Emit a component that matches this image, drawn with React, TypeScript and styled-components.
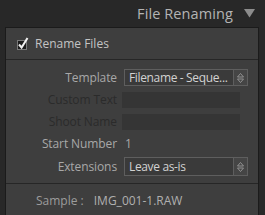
import React, { FC } from "react";
import styled, { createGlobalStyle } from "styled-components";

const GlobalStyle = createGlobalStyle`
  html, body {
    margin: 0;
    padding: 0;
    background: #282828;
    font-family: "Open Sans", "Noto Sans", sans-serif;
  }
`;

const Screen = styled.div`
  width: 265px;
  height: 215px;
  overflow: hidden;
  background: #282828;
`;

const Header = styled.div`
  height: 27px;
  display: flex;
  align-items: center;
  justify-content: flex-end;
  gap: 11px;
  padding-right: 10px;
  box-sizing: border-box;
`;

const Title = styled.span`
  color: #b4b4b4;
  font-size: 14.5px;
  letter-spacing: 0.1px;
`;

const Panel = styled.div`
  margin: 0 6px 0 5px;
  height: 188px;
  background: #3e3e3e;
  border: 1px solid #1b1b1b;
  border-bottom: none;
`;

const CheckRow = styled.label`
  height: 31px;
  display: flex;
  align-items: center;
  gap: 5px;
  padding-left: 10px;
  color: #c4c4c4;
  font-size: 12px;
`;

const Divider = styled.div`
  height: 1px;
  background: #262626;
`;

const Form = styled.div`
  display: grid;
  grid-template-columns: 111px 1fr;
  column-gap: 5px;
  row-gap: 5px;
  align-items: center;
  padding: 9px 0 7px;
`;

const Label = styled.span<{ $disabled?: boolean }>`
  text-align: right;
  font-size: 12px;
  letter-spacing: -0.1px;
  color: ${(p) => (p.$disabled ? "#2b2b2b" : "#a8a8a8")};
`;

const Select = styled.div<{ $h: number }>`
  margin-left: 2px;
  width: 124px;
  height: ${(p) => p.$h}px;
  box-sizing: border-box;
  display: flex;
  align-items: stretch;
  border: 1px solid #5e5e5e;
  background: #3a3a3a;
  color: #d2d2d2;
  font-size: 12px;
  letter-spacing: -0.35px;
`;

const SelectText = styled.span`
  flex: 1;
  display: flex;
  align-items: center;
  padding-left: 4px;
  white-space: nowrap;
  overflow: hidden;
`;

const Stepper = styled.span`
  width: 13px;
  flex-shrink: 0;
  display: flex;
  align-items: center;
  justify-content: center;
  border-left: 1px solid #5e5e5e;
  background: #454545;
`;

const TextBox = styled.div`
  width: 118px;
  height: 16px;
  background: #353535;
`;

const Value = styled.span`
  padding-left: 3px;
  color: #a8a8a8;
  font-size: 12px;
`;

const SampleRow = styled.div`
  display: flex;
  gap: 10px;
  padding: 8px 0 0 30px;
  font-size: 12px;
`;

const SampleLabel = styled.span`
  color: #9c9c9c;
`;

const SampleValue = styled.span`
  color: #b0b0b0;
`;

const Arrows: FC = () => (
  <svg width="7" height="10" viewBox="0 0 7 10">
    <path d="M3.5 0.5 L6.5 4 L0.5 4 Z" fill="none" stroke="#9a9a9a" strokeWidth="0.9" />
    <path d="M3.5 9.5 L6.5 6 L0.5 6 Z" fill="none" stroke="#9a9a9a" strokeWidth="0.9" />
  </svg>
);

const CheckBox: FC = () => (
  <svg width="14" height="14" viewBox="0 0 14 14">
    <rect x="1.5" y="3.5" width="9" height="9" fill="#1c1c1c" stroke="#7a7a7a" />
    <path d="M3 7.5 L5.6 10.5 L11.5 1" fill="none" stroke="#f2f2f2" strokeWidth="2" />
  </svg>
);

interface IRow {
  label: string;
  kind: "select" | "input" | "value";
  value?: string;
  h?: number;
}

const rows: IRow[] = [
  { label: "Template", kind: "select", value: "Filename - Seque...", h: 17 },
  { label: "Custom Text", kind: "input" },
  { label: "Shoot Name", kind: "input" },
  { label: "Start Number", kind: "value", value: "1" },
  { label: "Extensions", kind: "select", value: "Leave as-is", h: 19 },
];

const App: FC = () => {
  return (
    <Screen>
      <GlobalStyle />
      <Header>
        <Title>File Renaming</Title>
        <svg width="11" height="9" viewBox="0 0 11 9">
          <path d="M0 0 L11 0 L5.5 8.5 Z" fill="#8c8c8c" />
        </svg>
      </Header>
      <Panel>
        <CheckRow>
          <CheckBox />
          Rename Files
        </CheckRow>
        <Divider />
        <Form>
          {rows.map((row, index) => (
            <React.Fragment key={index}>
              <Label $disabled={row.kind === "input"}>{row.label}</Label>
              {row.kind === "select" && (
                <Select $h={row.h || 17}>
                  <SelectText>{row.value}</SelectText>
                  <Stepper>
                    <Arrows />
                  </Stepper>
                </Select>
              )}
              {row.kind === "input" && <TextBox />}
              {row.kind === "value" && <Value>{row.value}</Value>}
            </React.Fragment>
          ))}
        </Form>
        <Divider />
        <SampleRow>
          <SampleLabel>Sample :</SampleLabel>
          <SampleValue>IMG_001-1.RAW</SampleValue>
        </SampleRow>
      </Panel>
    </Screen>
  );
};

export default App;
